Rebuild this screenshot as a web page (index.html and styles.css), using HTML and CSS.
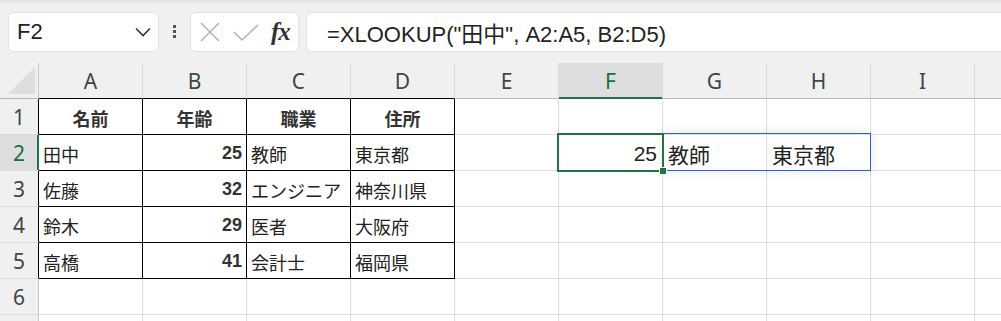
FILE: index.html
```html
<!DOCTYPE html>
<html lang="ja">
<head>
<meta charset="utf-8">
<link rel="stylesheet" href="styles.css">
</head>
<body>
<div class="app">
  <div class="toolbar">
    <div class="namebox">
      <span class="ref">F2</span>
      <svg class="chev" width="16" height="10" viewBox="0 0 16 10"><polyline points="1,1.5 8,8.5 15,1.5" fill="none" stroke="#333" stroke-width="1.6"/></svg>
    </div>
    <div class="dots"><i></i><i></i><i></i></div>
    <div class="fxbox">
      <svg class="ic-x" width="20" height="20" viewBox="0 0 20 20"><path d="M1 1 L19 19 M19 1 L1 19" stroke="#b4b4b4" stroke-width="1.6" fill="none"/></svg>
      <svg class="ic-ok" width="26" height="18" viewBox="0 0 26 18"><polyline points="1,8 9,16 25,1" fill="none" stroke="#b4b4b4" stroke-width="1.6"/></svg>
      <span class="fx">fx</span>
    </div>
    <div class="formula">=XLOOKUP("田中", A2:A5, B2:D5)</div>
  </div>

  <div class="sheet">
    <div class="grid">
      <div class="corner"><span class="tri"></span></div>
      <div class="ch tb">A</div>
      <div class="ch tb">B</div>
      <div class="ch tb">C</div>
      <div class="ch tb">D</div>
      <div class="ch">E</div>
      <div class="ch sel">F</div>
      <div class="ch">G</div>
      <div class="ch">H</div>
      <div class="ch">I</div>
      <div class="ch"></div>

      <div class="rh tr">1</div>
      <div class="c t hd">名前</div>
      <div class="c t hd">年齢</div>
      <div class="c t hd">職業</div>
      <div class="c t hd">住所</div>
      <div class="c"></div><div class="c"></div><div class="c"></div><div class="c"></div><div class="c"></div><div class="c"></div>

      <div class="rh tr sel">2</div>
      <div class="c t">田中</div>
      <div class="c t num">25</div>
      <div class="c t">教師</div>
      <div class="c t">東京都</div>
      <div class="c"></div>
      <div class="c big right">25</div>
      <div class="c big">教師</div>
      <div class="c big">東京都</div>
      <div class="c"></div><div class="c"></div>

      <div class="rh tr">3</div>
      <div class="c t">佐藤</div>
      <div class="c t num">32</div>
      <div class="c t">エンジニア</div>
      <div class="c t">神奈川県</div>
      <div class="c"></div><div class="c"></div><div class="c"></div><div class="c"></div><div class="c"></div><div class="c"></div>

      <div class="rh tr">4</div>
      <div class="c t">鈴木</div>
      <div class="c t num">29</div>
      <div class="c t">医者</div>
      <div class="c t">大阪府</div>
      <div class="c"></div><div class="c"></div><div class="c"></div><div class="c"></div><div class="c"></div><div class="c"></div>

      <div class="rh tr">5</div>
      <div class="c t">高橋</div>
      <div class="c t num">41</div>
      <div class="c t">会計士</div>
      <div class="c t">福岡県</div>
      <div class="c"></div><div class="c"></div><div class="c"></div><div class="c"></div><div class="c"></div><div class="c"></div>

      <div class="rh">6</div>
      <div class="c"></div><div class="c"></div><div class="c"></div><div class="c"></div><div class="c"></div><div class="c"></div><div class="c"></div><div class="c"></div><div class="c"></div><div class="c"></div>

      <div class="rh"></div>
      <div class="c"></div><div class="c"></div><div class="c"></div><div class="c"></div><div class="c"></div><div class="c"></div><div class="c"></div><div class="c"></div><div class="c"></div><div class="c"></div>
    </div>
    <div class="spill"></div>
    <div class="active"><span class="handle"></span></div>
  </div>
</div>
</body>
</html>
```

FILE: styles.css
```css
* { box-sizing: border-box; }
html, body { margin: 0; padding: 0; }
body {
  width: 1001px;
  height: 321px;
  overflow: hidden;
  background: #fff;
  font-family: "Liberation Sans", "Noto Sans CJK JP", sans-serif;
  color: #222;
}
.app { width: 1001px; height: 321px; overflow: hidden; }

.toolbar {
  height: 63px;
  display: flex;
  align-items: center;
  padding-left: 8px;
  background: linear-gradient(#e2e2e2 0, #f0f0f0 4px, #f0f0f0 100%);
}
.namebox {
  width: 151px;
  height: 40px;
  background: #fff;
  border: 1px solid #e2e2e2;
  border-radius: 6px;
  display: flex;
  align-items: center;
  justify-content: space-between;
  padding: 0 7px 0 8px;
}
.ref { font-size: 22px; color: #222; }
.chev { margin-top: 1px; }
.dots {
  margin-left: 14px;
  display: flex;
  flex-direction: column;
  gap: 2px;
}
.dots i {
  display: block;
  width: 3px;
  height: 3px;
  background: #555;
}
.fxbox {
  margin-left: 14px;
  width: 109px;
  height: 40px;
  background: #fff;
  border: 1px solid #e2e2e2;
  border-radius: 6px;
  display: flex;
  align-items: center;
  padding-left: 9px;
}
.ic-x { margin-top: 1px; }
.ic-ok { margin-left: 13px; margin-top: 2px; }
.fx {
  margin-left: 12px;
  font-family: "Liberation Serif", "DejaVu Serif", serif;
  font-style: italic;
  font-weight: bold;
  font-size: 25px;
  color: #333;
  letter-spacing: -1px;
}
.formula {
  margin-left: 7px;
  flex: 1;
  margin-right: -12px;
  height: 40px;
  background: #fff;
  border: 1px solid #e2e2e2;
  border-radius: 6px;
  display: flex;
  align-items: center;
  padding-left: 20px;
  font-size: 22px;
  color: #222;
}

.sheet { position: relative; height: 258px; overflow: hidden; }
.grid {
  display: grid;
  grid-template-columns: 39px repeat(10, 104px);
  grid-auto-rows: 36px;
}
.corner {
  background: #f0f0f0;
  border-right: 1px solid #c8c8c8;
  border-bottom: 1px solid #b8b8b8;
  position: relative;
}
.tri {
  position: absolute;
  left: 8px;
  top: 4px;
  width: 0;
  height: 0;
  border-left: 27px solid transparent;
  border-bottom: 27px solid #dedede;
}
.ch {
  background: #f0f0f0;
  border-right: 1px solid #d8d8d8;
  border-bottom: 1px solid #b8b8b8;
  display: flex;
  align-items: center;
  justify-content: center;
  font-family: "Noto Sans", "Liberation Sans", sans-serif;
  font-size: 21px;
  color: #444;
  padding-top: 1px;
}
.ch.tb { border-bottom-color: #000; }
.ch.sel {
  background: #dedede;
  color: #1e6b3f;
  border-bottom: 1px solid #217346;
  box-shadow: inset 0 -1px 0 #217346;
}
.rh {
  background: #f0f0f0;
  border-right: 1px solid #c8c8c8;
  border-bottom: 1px solid #dadada;
  display: flex;
  align-items: center;
  justify-content: center;
  font-family: "Noto Sans", "Liberation Sans", sans-serif;
  font-size: 21px;
  color: #444;
  padding-top: 1px;
}
.rh.tr { border-right-color: #000; }
.rh.sel {
  background: #dedede;
  color: #1e6b3f;
  border-right: 1px solid #217346;
  box-shadow: inset -1px 0 0 #217346;
}
.c {
  border-right: 1px solid #dedede;
  border-bottom: 1px solid #dedede;
  display: flex;
  align-items: center;
  padding: 2px 4px 0 4px;
  font-size: 18px;
  white-space: nowrap;
  overflow: hidden;
}
.c.t {
  border-right-color: #000;
  border-bottom-color: #000;
}
.c.hd {
  justify-content: center;
  font-weight: bold;
  color: #333;
}
.c.num {
  justify-content: flex-end;
  font-weight: bold;
  color: #333;
}
.c.big { font-size: 21px; padding-left: 5px; }
.c.right { justify-content: flex-end; padding-right: 5px; }

.spill {
  position: absolute;
  left: 663px;
  top: 70px;
  width: 208px;
  height: 38px;
  border: 1px solid #2563d6;
  box-shadow: 0 0 12px rgba(0, 0, 0, 0.10);
}
.active {
  position: absolute;
  left: 557px;
  top: 70px;
  width: 107px;
  height: 39px;
  border: 2px solid #217346;
}
.handle {
  position: absolute;
  right: -5px;
  bottom: -5px;
  width: 8px;
  height: 8px;
  background: #217346;
  border: 1px solid #fff;
}
```
